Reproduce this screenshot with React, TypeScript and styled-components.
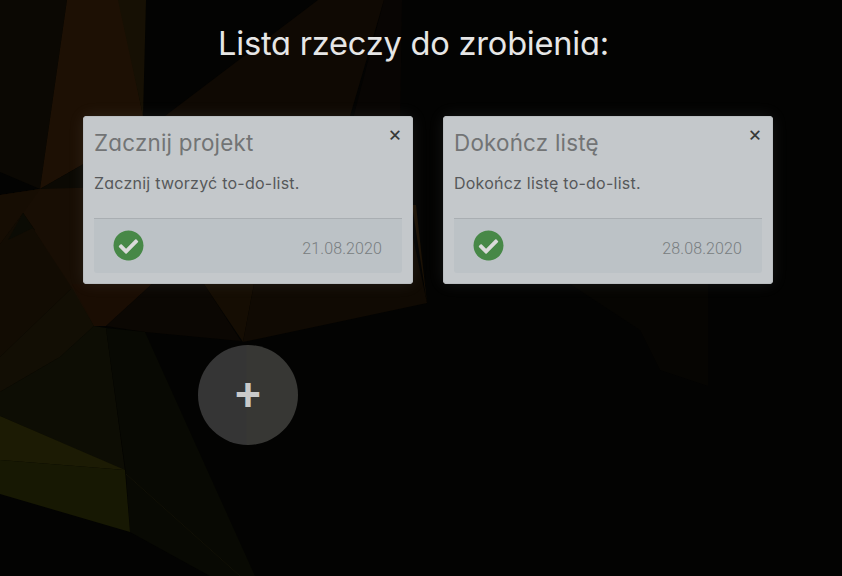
import React from "react";
import styled, { createGlobalStyle } from "styled-components";
import { FaCheckCircle } from "react-icons/fa";

const GlobalStyle = createGlobalStyle`
  * { box-sizing: border-box; }
  body {
    margin: 0;
    background: #030302;
    overflow: hidden;
    font-family: Inter, "Open Sans", sans-serif;
    font-feature-settings: "cv11";
  }
`;

const Page = styled.main`
  position: relative;
  isolation: isolate;
  width: 842px;
  height: 576px;
  overflow: hidden;
  padding: 17px 0 0 83px;
`;

const Backdrop = styled.svg`
  position: absolute;
  inset: 0;
  z-index: -1;
`;

const Heading = styled.h1`
  width: 661px;
  margin: 0 0 47px;
  text-align: center;
  font-size: 32.6px;
  line-height: 52px;
  font-weight: 400;
  letter-spacing: -0.22px;
  white-space: nowrap;
  color: #e6e6e6;
`;

const Board = styled.div`
  display: grid;
  grid-template-columns: 330px 330px;
  column-gap: 30px;
  row-gap: 61px;
`;

const Card = styled.article`
  display: flex;
  flex-direction: column;
  height: 168px;
  padding: 10px 11px 11px;
  border-radius: 4px;
  background: #c4c8cb;
  box-shadow: 0 0 16px rgba(190, 200, 205, 0.1), inset 0 0 0 1px #b9bdc0;
`;

const CardTop = styled.header`
  display: flex;
  justify-content: space-between;
  align-items: flex-start;
  height: 40px;
`;

const CardTitle = styled.h2`
  margin: 0;
  font-size: 22.4px;
  line-height: 34px;
  font-weight: 400;
  letter-spacing: 0.22px;
  color: #727475;
  white-space: nowrap;
`;

const CloseButton = styled.button`
  width: 14px;
  height: 16px;
  margin: 0;
  padding: 0;
  border: 0;
  background: none;
  color: #37393a;
  font: 400 21px/16px Inter, sans-serif;
`;

const CardText = styled.p`
  margin: 5px 0 0;
  font-size: 16px;
  line-height: 24px;
  font-weight: 400;
  color: #56585a;
  letter-spacing: 0.24px;
  white-space: nowrap;
`;

const CardFooter = styled.footer`
  display: flex;
  justify-content: space-between;
  align-items: center;
  height: 55px;
  margin-top: auto;
  padding: 0 20px 0 19.5px;
  border-top: 1px solid #a9aeb2;
  border-radius: 0 0 3px 3px;
  background: #bcc2c6;
`;

const DoneIcon = styled(FaCheckCircle)`
  width: 31px;
  height: 31px;
  margin: 0 0 1px -0.3px;
  color: #478847;
  border-radius: 50%;
  background: radial-gradient(#dadada 55%, transparent 56%);
`;

const DueDate = styled.time`
  padding-top: 5px;
  font: 300 16px/20px Roboto, sans-serif;
  letter-spacing: 0.1px;
  color: #787d80;
`;

const AddButton = styled.button`
  justify-self: center;
  display: flex;
  justify-content: center;
  align-items: center;
  width: 100px;
  height: 100px;
  padding: 0 0 2px;
  border: 0;
  border-radius: 50%;
  background: linear-gradient(90deg, #353535 48%, #373734 49%);
  color: #cacaca;
  font: 500 46px/56px Roboto, sans-serif;
`;

const facets: { points: string; fill: string }[] = [
  { points: "0,0 67,0 40,189 0,172", fill: "#0b0803" },
  { points: "67,0 120,0 143,116 143,130 40,189", fill: "#1d1004" },
  { points: "118,0 146,0 143,116", fill: "#161004" },
  { points: "318,0 384,0 350,116 165,116", fill: "#0f0903" },
  { points: "384,0 402,0 400,130 350,130", fill: "#080503" },
  { points: "40,189 143,130 110,195", fill: "#0b0903" },
  { points: "0,195 40,189 110,187 110,290 94,326 23,213 0,244", fill: "#180e04" },
  { points: "0,195 40,189 23,213 0,244", fill: "#160d03" },
  { points: "23,213 35,230 8,243", fill: "#090903" },
  { points: "0,244 23,213 72,288 0,357", fill: "#120c03" },
  { points: "23,213 33,228 8,240", fill: "#0b0b04" },
  { points: "72,288 94,326 60,357 0,392 0,357", fill: "#120e04" },
  { points: "94,326 72,284 152,284 106,326", fill: "#1a0d03" },
  { points: "106,326 152,284 204,284 241,341 145,332", fill: "#0b0703" },
  { points: "204,284 254,284 243,342", fill: "#150d03" },
  { points: "254,284 405,200 427,303 243,342", fill: "#100a03" },
  { points: "412,205 416,205 427,303", fill: "#1a1004" },
  { points: "94,326 106,328 125,471 0,416 0,392 60,357", fill: "#0d0d04" },
  { points: "106,328 145,332 255,576 240,576 126,474", fill: "#080903" },
  { points: "126,474 240,576 210,576 130,532", fill: "#080903" },
  { points: "0,416 125,470 0,460", fill: "#1c1b04" },
  { points: "0,460 125,470 130,532 0,494", fill: "#171803" },
  { points: "570,284 708,284 708,386 660,370 640,330", fill: "#060502" },
];

const FacetBackground = () => (
  <Backdrop width="842" height="576" viewBox="0 0 842 576" aria-hidden="true">
    <rect width="842" height="576" fill="#030302" />
    {facets.map((f) => (
      <polygon key={f.points} points={f.points} fill={f.fill} />
    ))}
    <path d="M126 474 240 576" stroke="#111006" strokeWidth="1" />
  </Backdrop>
);

const tasks = [
  { title: "Zacznij projekt", text: "Zacznij tworzyć to-do-list.", date: "21.08.2020" },
  { title: "Dokończ listę", text: "Dokończ listę to-do-list.", date: "28.08.2020" },
];

export default function App() {
  return (
    <Page>
      <GlobalStyle />
      <FacetBackground />
      <Heading>Lista rzeczy do zrobienia:</Heading>
      <Board>
        {tasks.map((task) => (
          <Card key={task.title}>
            <CardTop>
              <CardTitle>{task.title}</CardTitle>
              <CloseButton aria-label="Usuń">×</CloseButton>
            </CardTop>
            <CardText>{task.text}</CardText>
            <CardFooter>
              <DoneIcon />
              <DueDate>{task.date}</DueDate>
            </CardFooter>
          </Card>
        ))}
        <AddButton aria-label="Dodaj">+</AddButton>
      </Board>
    </Page>
  );
}
